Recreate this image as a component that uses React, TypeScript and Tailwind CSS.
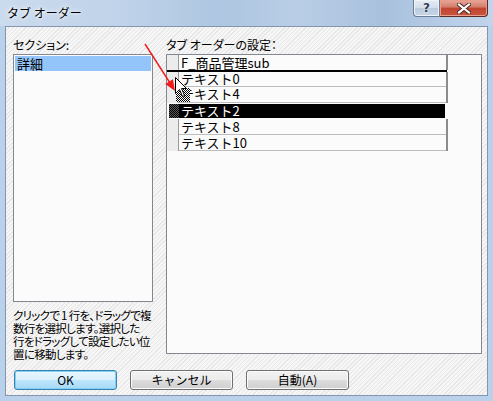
import React from "react";

const rows = [
  { label: "テキスト0", h: "h-[15px]" },
  { label: "テキスト4", h: "h-[16px]" },
];
const rows2 = [
  { label: "テキスト8" },
  { label: "テキスト10" },
];

function GrayButton({ children }: { children: React.ReactNode }) {
  return (
    <div className="flex h-[20px] w-[103px] items-center justify-center rounded-[3px] border border-[#707070] bg-[linear-gradient(to_bottom,#f2f2f2_0%,#ebebeb_50%,#dddddd_50%,#cfcfcf_100%)] text-[12px] leading-[14px] shadow-[inset_0_0_0_1px_#fbfbfb]">
      {children}
    </div>
  );
}

export default function App() {
  return (
    <div className="relative flex h-[401px] w-[493px] flex-col overflow-hidden bg-[#b9d1ea] font-['Noto_Sans_CJK_JP',sans-serif] text-black">
      {/* Title bar */}
      <div className="flex h-[26px] shrink-0 items-start bg-[linear-gradient(to_right,#cbdbee_0%,#bfd2e9_25%,#aec6e1_45%,#b9cde6_60%,#a9c1de_78%,#c1d4eb_100%)]">
        <div className="pl-[7px] pt-[6px] text-[12px] leading-[14px] [text-shadow:0_0_6px_#ffffff,0_0_3px_#ffffff]">
          タブ オーダー
        </div>
        <div className="ml-auto mr-[5px] flex">
          <div className="flex h-[17px] w-[27px] items-center justify-center rounded-bl-[4px] border border-t-0 border-[#6b7d94] bg-[linear-gradient(to_bottom,#e4ebf4_0%,#d3deea_50%,#bccbdc_50%,#c8d6e6_100%)] shadow-[inset_0_0_0_1px_#eef3f8]">
            <span className="font-['DejaVu_Sans',sans-serif] text-[12px] font-bold leading-[12px] text-[#2e3f58] [text-shadow:0_0_2px_#ffffff]">
              ?
            </span>
          </div>
          <div className="flex h-[17px] w-[48px] items-center justify-center rounded-br-[4px] border border-l-0 border-t-0 border-[#5b2a24] bg-[linear-gradient(to_bottom,#e8a899_0%,#d37b69_45%,#c0442f_50%,#c9553f_100%)] shadow-[inset_0_0_0_1px_#e99d8f]">
            <svg width="14" height="11" viewBox="0 0 14 11">
              <path d="M2 1.5 L12 9.5 M12 1.5 L2 9.5" stroke="#4a2420" strokeWidth="4" strokeLinecap="square" />
              <path d="M2 1.5 L12 9.5 M12 1.5 L2 9.5" stroke="#ffffff" strokeWidth="2.2" strokeLinecap="square" />
            </svg>
          </div>
        </div>
      </div>

      {/* Client area */}
      <div className="mx-[5px] flex h-[370px] shrink-0 flex-col border border-[#8496ad] bg-[repeating-linear-gradient(135deg,#f6f6f6_0px,#f6f6f6_2px,#e7e7e7_2px,#e7e7e7_3px)] pl-[7px] pt-[11px]">
        <div className="flex items-start">
          {/* Left column */}
          <div className="flex w-[140px] flex-col">
            <div className="h-[14px] text-[12px] leading-[14px] [font-feature-settings:'palt']">セクション:</div>
            <div className="mt-[2px] h-[248px] border border-[#828790] bg-[#fbfbfb] p-[1px]">
              <div className="h-[15px] bg-[#94c5fa] pl-[2px] text-[13px] leading-[15px]">詳細</div>
            </div>
            <div className="mt-[7px] flex flex-col whitespace-nowrap text-[11.5px] leading-[13px] tracking-[-0.7px] [font-feature-settings:'palt']">
              <div className="h-[13px]">クリックで 1 行を、ドラッグで複</div>
              <div className="h-[13px]">数行を選択します。選択した</div>
              <div className="h-[13px]">行をドラッグして設定したい位</div>
              <div className="h-[13px]">置に移動します。</div>
            </div>
          </div>

          {/* Right column */}
          <div className="ml-[13px] flex w-[316px] flex-col">
            <div className="h-[14px] text-[12px] leading-[14px] [font-feature-settings:'palt']">タブ オーダーの設定：</div>
            <div className="mt-[2px] flex h-[300px] flex-col border border-[#828790] bg-[#fbfbfb] text-[13px]">
              {/* header row */}
              <div className="flex h-[15px]">
                <div className="w-[11px] bg-[#ececec]" />
                <div className="w-[1px] bg-[#9a9a9a]" />
                <div className="w-[267px] pl-[2px] leading-[15px]">F_商品管理sub</div>
                <div className="w-[2px] bg-[#8c8c8c]" />
              </div>
              <div className="h-[2px] w-[280px] bg-black" />
              {rows.map((r) => (
                <div key={r.label} className={`flex ${r.h}`}>
                  <div className="w-[11px] bg-[#ececec]" />
                  <div className="w-[1px] bg-[#9a9a9a]" />
                  <div className="w-[267px] border-b border-[#bdbdbd] pl-[2px] leading-[14px]">{r.label}</div>
                  <div className="w-[2px] bg-[#8c8c8c]" />
                </div>
              ))}
              {/* selected (black) row */}
              <div className="flex h-[16px] items-center pl-[2px]">
                <div className="flex h-[14px] w-[276px]">
                  <div className="w-[10px] bg-[repeating-conic-gradient(#000000_0%_25%,#5a5a5a_0%_50%)] bg-[length:2px_2px]" />
                  <div className="flex-1 bg-black pl-[2px] leading-[14px] text-white">テキスト2</div>
                </div>
              </div>
              {rows2.map((r) => (
                <div key={r.label} className="flex h-[16px]">
                  <div className="w-[11px] bg-[#ececec]" />
                  <div className="w-[1px] bg-[#9a9a9a]" />
                  <div className="w-[267px] border-b border-[#bdbdbd] pl-[2px] leading-[15px]">{r.label}</div>
                  <div className="w-[2px] bg-[#8c8c8c]" />
                </div>
              ))}
            </div>
          </div>
        </div>

        {/* Buttons */}
        <div className="mt-[9px] flex gap-[13px] pl-[1px]">
          <div className="flex h-[20px] w-[103px] items-center justify-center rounded-[3px] border border-[#3c7fb1] bg-[linear-gradient(to_bottom,#eaf6fd_0%,#d9f0fc_50%,#bee6fd_50%,#a7d9f5_100%)] text-[12px] leading-[14px] shadow-[inset_0_0_0_1px_#7fd2f5]">
            OK
          </div>
          <GrayButton>キャンセル</GrayButton>
          <GrayButton>自動(A)</GrayButton>
        </div>
      </div>

      {/* Overlay: drag cursor and red annotation arrow */}
      <svg className="pointer-events-none absolute left-0 top-0" width="493" height="401" viewBox="0 0 493 401">
        <defs>
          <pattern id="dither" width="2" height="2" patternUnits="userSpaceOnUse">
            <rect width="2" height="2" fill="#ffffff" />
            <rect width="1" height="1" fill="#000000" />
            <rect x="1" y="1" width="1" height="1" fill="#000000" />
          </pattern>
        </defs>
        <rect x="176" y="88" width="14" height="14" fill="url(#dither)" />
        <polygon
          points="175.5,77.5 175.5,93.5 179.5,89.5 182.5,96.5 184.5,95.5 181.5,88.5 186.5,88.5"
          fill="#ffffff"
          stroke="#000000"
          strokeWidth="1"
        />
        <line x1="145" y1="44" x2="170" y2="83" stroke="#f01c1c" strokeWidth="1.4" />
        <polygon points="175,91 165.3,84.1 172.9,79.3" fill="#f01c1c" />
      </svg>
    </div>
  );
}
